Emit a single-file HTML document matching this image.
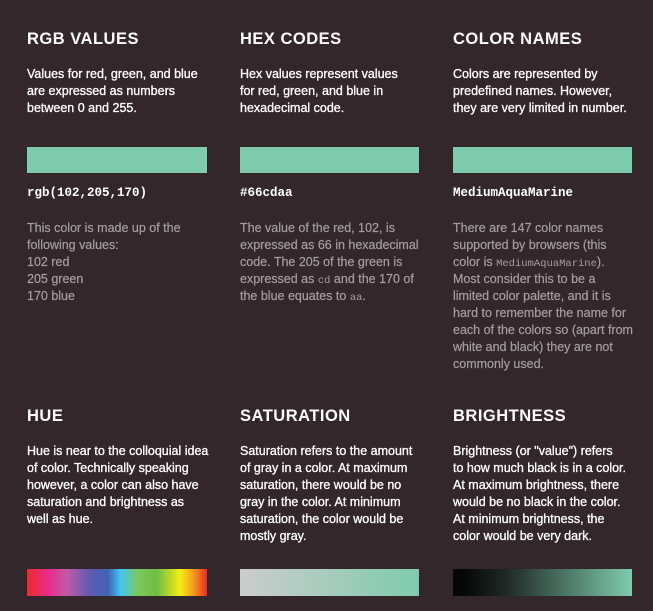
<!DOCTYPE html>
<html><head><meta charset="utf-8"><style>
body{margin:0;width:653px;height:611px;background:#34272c;position:relative;overflow:hidden;font-family:"Liberation Sans",sans-serif}
.c{position:absolute;width:200px}
h2{position:absolute;margin:0;font-size:16.5px;font-weight:bold;color:#fff;letter-spacing:0.5px;top:30px;white-space:nowrap}
.b{position:absolute;top:66px;font-size:12.5px;line-height:17px;color:#fff;letter-spacing:0px;white-space:nowrap;-webkit-text-stroke:0.3px #fff}
.sw{position:absolute;top:147px;height:26px;width:180px;background:#7fcbad}
.code{position:absolute;top:186px;font-family:"Liberation Mono",monospace;font-size:12.5px;color:#fff;font-weight:bold;white-space:nowrap}
.g{position:absolute;top:220px;font-size:12.5px;line-height:17px;color:#a49ea0;letter-spacing:0px;white-space:nowrap;-webkit-text-stroke:0.2px #a49ea0}
.g code{font-family:"Liberation Mono",monospace;font-size:10.5px;line-height:0;-webkit-text-stroke:0}
.gr{position:absolute;top:569px;height:27px}
</style></head><body>
<div class="c" style="left:27px;top:0">
<h2>RGB VALUES</h2>
<div class="b">Values for red, green, and blue<br>are expressed as numbers<br>between 0 and 255.</div>
<div class="sw"></div>
<div class="code">rgb(102,205,170)</div>
<div class="g">This color is made up of the<br>following values:<br>102 red<br>205 green<br>170 blue</div>
</div>
<div class="c" style="left:240px;top:0">
<h2>HEX CODES</h2>
<div class="b">Hex values represent values<br>for red, green, and blue in<br>hexadecimal code.</div>
<div class="sw" style="width:179px"></div>
<div class="code">#66cdaa</div>
<div class="g">The value of the red, 102, is<br>expressed as 66 in hexadecimal<br>code. The 205 of the green is<br>expressed as <code>cd</code> and the 170 of<br>the blue equates to <code>aa</code>.</div>
</div>
<div class="c" style="left:453px;top:0">
<h2>COLOR NAMES</h2>
<div class="b">Colors are represented by<br>predefined names. However,<br>they are very limited in number.</div>
<div class="sw" style="width:179px"></div>
<div class="code">MediumAquaMarine</div>
<div class="g">There are 147 color names<br>supported by browsers (this<br>color is <code>MediumAquaMarine</code>).<br>Most consider this to be a<br>limited color palette, and it is<br>hard to remember the name for<br>each of the colors so (apart from<br>white and black) they are not<br>commonly used.</div>
</div>

<div class="c" style="left:27px;top:377px">
<h2>HUE</h2>
<div class="b" style="top:66px">Hue is near to the colloquial idea<br>of color. Technically speaking<br>however, a color can also have<br>saturation and brightness as<br>well as hue.</div>
</div>
<div class="c" style="left:240px;top:377px">
<h2>SATURATION</h2>
<div class="b" style="top:66px">Saturation refers to the amount<br>of gray in a color. At maximum<br>saturation, there would be no<br>gray in the color. At minimum<br>saturation, the color would be<br>mostly gray.</div>
</div>
<div class="c" style="left:453px;top:377px">
<h2>BRIGHTNESS</h2>
<div class="b" style="top:66px">Brightness (or "value") refers<br>to how much black is in a color.<br>At maximum brightness, there<br>would be no black in the color.<br>At minimum brightness, the<br>color would be very dark.</div>
</div>

<div class="gr" style="left:27px;width:180px;background:linear-gradient(90deg,#ee2a2a 0%,#ea2b8c 12%,#c25aa6 22%,#5e5bb0 35%,#4162b4 45%,#3fc8f0 52%,#7ec85a 62%,#6dbd44 72%,#f5ec14 85%,#f5a020 92%,#ee2a24 100%)"></div>
<div class="gr" style="left:240px;width:179px;background:linear-gradient(90deg,#cccccc,#7fcbad)"></div>
<div class="gr" style="left:453px;width:179px;background:linear-gradient(90deg,#050505 5%,#1f2a26 30%,#7fcbad 100%)"></div>
</body></html>
